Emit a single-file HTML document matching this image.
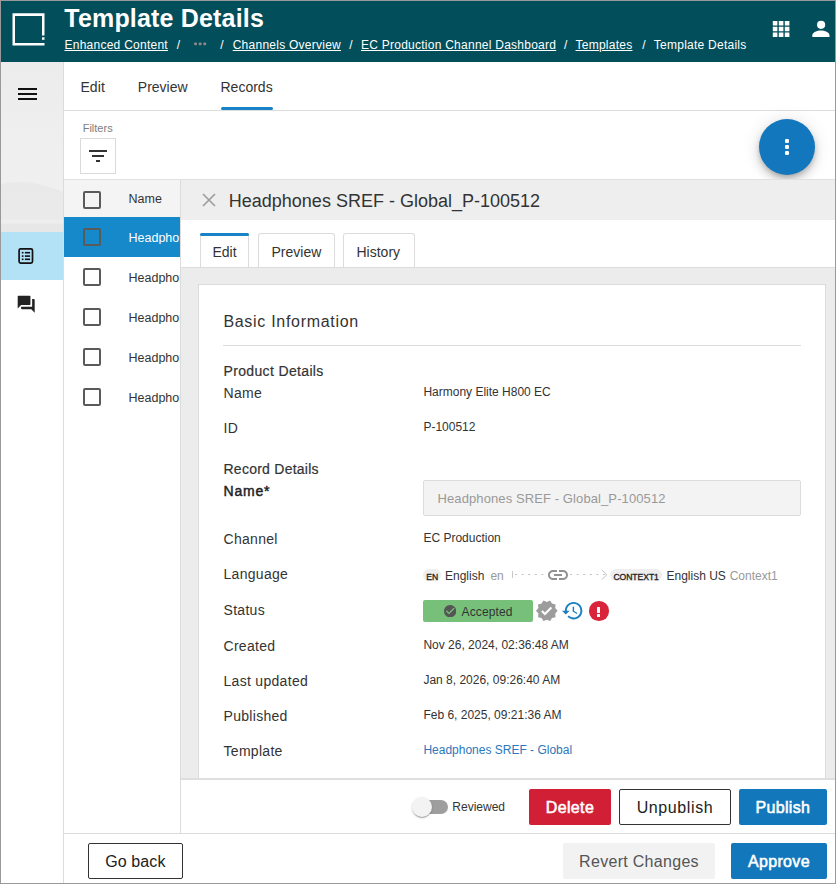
<!DOCTYPE html>
<html><head><meta charset="utf-8"><style>
html,body{margin:0;padding:0;width:836px;height:884px;overflow:hidden;background:#fff}
body{position:relative;font-family:"Liberation Sans", sans-serif}
.t{position:absolute;white-space:nowrap}
.r{position:absolute}
</style></head><body>
<div class="r" style="left:0px;top:0px;width:836px;height:884px;background:#fff"></div>
<div class="r" style="left:0px;top:0px;width:836px;height:62px;background:#034e5b"></div>
<svg class="r" style="left:0;top:0" width="60" height="60"><g fill="#fff">
<path d="M12.5 13.3H44.5V35.5H42V15.9H15V42.9H44.5V45.5H12.5Z"/>
<rect x="42" y="37.3" width="2.5" height="2.5"/></g></svg>
<div class="t" style="left:64.30px;top:5.74px;font-size:25px;line-height:25px;color:#fff;font-weight:700;letter-spacing:0.18px;">Template Details</div>
<div class="t" style="left:64.50px;top:39.34px;font-size:12px;line-height:12px;color:#fff;font-weight:400;letter-spacing:0.25px;text-decoration:underline;text-underline-offset:1px">Enhanced Content</div>
<div class="t" style="left:176.80px;top:39.34px;font-size:12px;line-height:12px;color:#fff;font-weight:400;letter-spacing:0.25px;">/</div>
<svg class="r" style="left:190px;top:40px" width="20" height="8"><g fill="#8e8a88"><rect x="4.1" y="2.6" width="2.9" height="2.6" rx="1"/><rect x="8.7" y="2.6" width="2.9" height="2.6" rx="1"/><rect x="13.3" y="2.6" width="2.9" height="2.6" rx="1"/></g></svg>
<div class="t" style="left:220.20px;top:39.34px;font-size:12px;line-height:12px;color:#fff;font-weight:400;letter-spacing:0.25px;">/</div>
<div class="t" style="left:232.70px;top:39.34px;font-size:12px;line-height:12px;color:#fff;font-weight:400;letter-spacing:0.25px;text-decoration:underline;text-underline-offset:1px">Channels Overview</div>
<div class="t" style="left:349.30px;top:39.34px;font-size:12px;line-height:12px;color:#fff;font-weight:400;letter-spacing:0.25px;">/</div>
<div class="t" style="left:361.00px;top:39.34px;font-size:12px;line-height:12px;color:#fff;font-weight:400;letter-spacing:0.25px;text-decoration:underline;text-underline-offset:1px">EC Production Channel Dashboard</div>
<div class="t" style="left:564.00px;top:39.34px;font-size:12px;line-height:12px;color:#fff;font-weight:400;letter-spacing:0.25px;">/</div>
<div class="t" style="left:575.50px;top:39.34px;font-size:12px;line-height:12px;color:#fff;font-weight:400;letter-spacing:0.25px;text-decoration:underline;text-underline-offset:1px">Templates</div>
<div class="t" style="left:642.30px;top:39.34px;font-size:12px;line-height:12px;color:#fff;font-weight:400;letter-spacing:0.25px;">/</div>
<div class="t" style="left:653.80px;top:39.34px;font-size:12px;line-height:12px;color:#fff;font-weight:400;letter-spacing:0.25px;">Template Details</div>
<svg class="r" style="left:0;top:0" width="836" height="62"><g fill="#fff"><rect x="772.8" y="21.00" width="4.6" height="4.5"/><rect x="772.8" y="26.75" width="4.6" height="4.5"/><rect x="772.8" y="32.50" width="4.6" height="4.5"/><rect x="778.8" y="21.00" width="4.6" height="4.5"/><rect x="778.8" y="26.75" width="4.6" height="4.5"/><rect x="778.8" y="32.50" width="4.6" height="4.5"/><rect x="784.8" y="21.00" width="4.6" height="4.5"/><rect x="784.8" y="26.75" width="4.6" height="4.5"/><rect x="784.8" y="32.50" width="4.6" height="4.5"/></g></svg>
<svg class="r" style="left:0;top:0" width="836" height="62"><g fill="#fff"><circle cx="821.1" cy="24.8" r="4.1"/><path d="M812.3 37V35.4C812.3 32.6 817.2 30.6 820.9 30.6S829.5 32.6 829.5 35.4V37Z"/></g></svg>
<div class="r" style="left:0px;top:62px;width:64px;height:822px;background:#fff"></div>
<div class="r" style="left:0px;top:62px;width:63px;height:170px;background:linear-gradient(#ececec,#efefef 50%,#f0f0ef)"></div>
<svg class="r" style="left:0;top:62px" width="63" height="170"><defs><linearGradient id="mg" x1="0" y1="0" x2="0" y2="1"><stop offset="0" stop-color="#e9e9e9"/><stop offset="1" stop-color="#ebebeb"/></linearGradient></defs><path d="M0 122.5 C6 121 12 120 20 120 C32 120 45 123 63 129.7 L63 170 L0 170Z" fill="url(#mg)"/><rect x="0" y="158" width="63" height="3" fill="#eeeeee"/><rect x="0" y="162" width="63" height="8" fill="#e7e7e7"/></svg>
<div class="r" style="left:63px;top:62px;width:1px;height:822px;background:#dcdcdc"></div>
<div class="r" style="left:18.3px;top:88px;width:18.7px;height:2px;background:#111"></div>
<div class="r" style="left:18.3px;top:93px;width:18.7px;height:2px;background:#111"></div>
<div class="r" style="left:18.3px;top:98px;width:18.7px;height:2px;background:#111"></div>
<div class="r" style="left:0px;top:232px;width:63px;height:47.5px;background:#b3e1f6"></div>
<svg class="r" style="left:0;top:240px" width="63" height="40"><rect x="19.1" y="8.8" width="13.4" height="14.4" rx="1.6" fill="none" stroke="#111" stroke-width="1.7"/><g fill="#111"><rect x="21.8" y="11.9" width="1.7" height="1.6"/><rect x="21.8" y="15.3" width="1.7" height="1.6"/><rect x="21.8" y="18.5" width="1.7" height="1.6"/><rect x="24.9" y="11.9" width="5.2" height="1.6"/><rect x="24.9" y="15.3" width="5.2" height="1.6"/><rect x="24.9" y="18.5" width="5.2" height="1.6"/></g></svg>
<svg class="r" style="left:15.7px;top:294.3px" width="20.4" height="20.4" viewBox="0 0 24 24"><path fill="#222" d="M21 6h-2v9H6v2c0 .55.45 1 1 1h11l4 4V7c0-.55-.45-1-1-1zm-4 6V3c0-.55-.45-1-1-1H3c-.55 0-1 .45-1 1v14l4-4h10c.55 0 1-.45 1-1z"/></svg>
<div class="t" style="left:80.40px;top:80.25px;font-size:14px;line-height:14px;color:#333;font-weight:400;letter-spacing:0.1px;">Edit</div>
<div class="t" style="left:137.80px;top:80.25px;font-size:14px;line-height:14px;color:#333;font-weight:400;letter-spacing:0px;">Preview</div>
<div class="t" style="left:220.50px;top:80.25px;font-size:14px;line-height:14px;color:#333;font-weight:400;letter-spacing:0px;">Records</div>
<div class="r" style="left:220.5px;top:106.5px;width:52px;height:3px;background:#1a82c6;border-radius:2px"></div>
<div class="r" style="left:64px;top:110px;width:772px;height:1px;background:#dedede"></div>
<div class="t" style="left:82.70px;top:122.59px;font-size:11px;line-height:11px;color:#7d7d7d;font-weight:400;letter-spacing:0px;">Filters</div>
<div class="r" style="left:80px;top:138px;width:36px;height:36px;border:1px solid #dadada;box-sizing:border-box"></div>
<div class="r" style="left:88.8px;top:150px;width:18.3px;height:2px;background:#333"></div>
<div class="r" style="left:92.1px;top:155px;width:11.9px;height:2px;background:#333"></div>
<div class="r" style="left:96px;top:160px;width:4px;height:2px;background:#333"></div>
<div class="r" style="left:64px;top:178.5px;width:116px;height:38.5px;background:#f4f4f4;border-top:1px solid #e2e2e2;box-sizing:border-box"></div>
<div class="r" style="left:83px;top:191px;width:18px;height:18px;border:2px solid #5a5a5a;border-radius:2px;box-sizing:border-box"></div>
<div class="t" style="left:128.50px;top:192.62px;font-size:12.5px;line-height:12.5px;color:#333;font-weight:400;letter-spacing:0px;">Name</div>
<div class="r" style="left:64px;top:217px;width:116px;height:40px;background:#1589c9"></div>
<div class="r" style="left:83px;top:228px;width:18px;height:18px;border:2px solid #5a5a5a;border-radius:2px;box-sizing:border-box"></div>
<div class="t" style="left:128.50px;top:231.62px;font-size:12.5px;line-height:12.5px;color:#fff;font-weight:400;letter-spacing:0px;width:51px;overflow:hidden;white-space:nowrap">Headphones SREF - Global_P-100512</div>
<div class="r" style="left:83px;top:268px;width:18px;height:18px;border:2px solid #5a5a5a;border-radius:2px;box-sizing:border-box"></div>
<div class="t" style="left:128.50px;top:271.62px;font-size:12.5px;line-height:12.5px;color:#333;font-weight:400;letter-spacing:0px;width:51px;overflow:hidden;white-space:nowrap">Headphones SREF - Global_P-100512</div>
<div class="r" style="left:83px;top:308px;width:18px;height:18px;border:2px solid #5a5a5a;border-radius:2px;box-sizing:border-box"></div>
<div class="t" style="left:128.50px;top:311.62px;font-size:12.5px;line-height:12.5px;color:#333;font-weight:400;letter-spacing:0px;width:51px;overflow:hidden;white-space:nowrap">Headphones SREF - Global_P-100512</div>
<div class="r" style="left:83px;top:348px;width:18px;height:18px;border:2px solid #5a5a5a;border-radius:2px;box-sizing:border-box"></div>
<div class="t" style="left:128.50px;top:351.62px;font-size:12.5px;line-height:12.5px;color:#333;font-weight:400;letter-spacing:0px;width:51px;overflow:hidden;white-space:nowrap">Headphones SREF - Global_P-100512</div>
<div class="r" style="left:83px;top:388px;width:18px;height:18px;border:2px solid #5a5a5a;border-radius:2px;box-sizing:border-box"></div>
<div class="t" style="left:128.50px;top:391.62px;font-size:12.5px;line-height:12.5px;color:#333;font-weight:400;letter-spacing:0px;width:51px;overflow:hidden;white-space:nowrap">Headphones SREF - Global_P-100512</div>
<div class="r" style="left:759px;top:119px;width:56px;height:56px;background:#1277bd;border-radius:50%;box-shadow:0 3px 5px -1px rgba(0,0,0,.2),0 6px 10px 0 rgba(0,0,0,.14),0 1px 18px 0 rgba(0,0,0,.12)"></div>
<div class="r" style="left:785.2px;top:139.2px;width:3.6px;height:3.6px;background:#fff;border-radius:1.2px"></div>
<div class="r" style="left:785.2px;top:145.2px;width:3.6px;height:3.6px;background:#fff;border-radius:1.2px"></div>
<div class="r" style="left:785.2px;top:151.2px;width:3.6px;height:3.6px;background:#fff;border-radius:1.2px"></div>
<div class="r" style="left:180px;top:178.5px;width:655px;height:654.5px;background:#fff;border-left:1px solid #dcdcdc;border-top:1px solid #e0e0e0;box-sizing:border-box"></div>
<div class="r" style="left:181px;top:180px;width:654px;height:40px;background:#eeeeee"></div>
<svg class="r" style="left:201.7px;top:193px" width="14" height="14"><path d="M1 1L13 13M13 1L1 13" stroke="#9c9c9c" stroke-width="1.6"/></svg>
<div class="t" style="left:228.80px;top:192.06px;font-size:18px;line-height:18px;color:#333;font-weight:400;letter-spacing:0px;">Headphones SREF - Global_P-100512</div>
<div class="r" style="left:199.7px;top:232.7px;width:49.5px;height:34.3px;background:#fff;border:1px solid #dcdcdc;border-bottom:none;border-radius:3px 3px 0 0;box-sizing:border-box"></div>
<div class="r" style="left:199.7px;top:232.8px;width:49.5px;height:3.2px;background:#1a82c6;border-radius:1.6px"></div>
<div class="r" style="left:258.4px;top:232.7px;width:76.6px;height:34.3px;background:#fff;border:1px solid #dcdcdc;border-bottom:none;border-radius:3px 3px 0 0;box-sizing:border-box"></div>
<div class="r" style="left:343.3px;top:232.7px;width:72.2px;height:34.3px;background:#fff;border:1px solid #dcdcdc;border-bottom:none;border-radius:3px 3px 0 0;box-sizing:border-box"></div>
<div class="t" style="left:212.50px;top:244.85px;font-size:14px;line-height:14px;color:#333;font-weight:400;letter-spacing:0px;">Edit</div>
<div class="t" style="left:271.50px;top:244.85px;font-size:14px;line-height:14px;color:#333;font-weight:400;letter-spacing:0px;">Preview</div>
<div class="t" style="left:356.50px;top:244.85px;font-size:14px;line-height:14px;color:#333;font-weight:400;letter-spacing:0px;">History</div>
<div class="r" style="left:181px;top:267px;width:654px;height:511px;background:#ececec;border-top:1px solid #dcdcdc;box-sizing:border-box"></div>
<div class="r" style="left:198px;top:284px;width:628px;height:494px;background:#fff;border:1px solid #dcdcdc;border-bottom:none;box-sizing:border-box"></div>
<div class="t" style="left:223.40px;top:314.46px;font-size:16px;line-height:16px;color:#333;font-weight:400;letter-spacing:0.7px;">Basic Information</div>
<div class="r" style="left:223px;top:345px;width:578px;height:1px;background:#dcdcdc"></div>
<div class="t" style="left:223.50px;top:364.05px;font-size:14px;line-height:14px;color:#333;font-weight:400;letter-spacing:0.35px;-webkit-text-stroke:0.2px #333">Product Details</div>
<div class="t" style="left:223.50px;top:386.15px;font-size:14px;line-height:14px;color:#333;font-weight:400;letter-spacing:0.3px;">Name</div>
<div class="t" style="left:423.40px;top:385.64px;font-size:12px;line-height:12px;color:#333;font-weight:400;letter-spacing:0px;">Harmony Elite H800 EC</div>
<div class="t" style="left:223.50px;top:420.95px;font-size:14px;line-height:14px;color:#333;font-weight:400;letter-spacing:0.3px;">ID</div>
<div class="t" style="left:423.40px;top:420.84px;font-size:12px;line-height:12px;color:#333;font-weight:400;letter-spacing:0px;">P-100512</div>
<div class="t" style="left:223.50px;top:462.15px;font-size:14px;line-height:14px;color:#333;font-weight:400;letter-spacing:0.25px;-webkit-text-stroke:0.2px #333">Record Details</div>
<div class="t" style="left:223.50px;top:483.85px;font-size:14px;line-height:14px;color:#222;font-weight:400;letter-spacing:0.8px;-webkit-text-stroke:0.45px #222">Name*</div>
<div class="r" style="left:423.4px;top:480.4px;width:377.6px;height:35.2px;background:#f3f3f3;border:1px solid #dcdcdc;box-sizing:border-box;border-radius:2px"></div>
<div class="t" style="left:437.50px;top:491.70px;font-size:13px;line-height:13px;color:#999;font-weight:400;letter-spacing:0.1px;">Headphones SREF - Global_P-100512</div>
<div class="t" style="left:223.50px;top:532.15px;font-size:14px;line-height:14px;color:#333;font-weight:400;letter-spacing:0.3px;">Channel</div>
<div class="t" style="left:423.40px;top:531.94px;font-size:12px;line-height:12px;color:#333;font-weight:400;letter-spacing:0px;">EC Production</div>
<div class="t" style="left:223.50px;top:567.45px;font-size:14px;line-height:14px;color:#333;font-weight:400;letter-spacing:0.3px;">Language</div>
<div class="t" style="left:223.50px;top:603.15px;font-size:14px;line-height:14px;color:#333;font-weight:400;letter-spacing:0.3px;">Status</div>
<div class="t" style="left:223.50px;top:638.85px;font-size:14px;line-height:14px;color:#333;font-weight:400;letter-spacing:0.3px;">Created</div>
<div class="t" style="left:423.40px;top:639.24px;font-size:12px;line-height:12px;color:#333;font-weight:400;letter-spacing:0px;">Nov 26, 2024, 02:36:48 AM</div>
<div class="t" style="left:223.50px;top:674.15px;font-size:14px;line-height:14px;color:#333;font-weight:400;letter-spacing:0.3px;">Last updated</div>
<div class="t" style="left:423.40px;top:673.64px;font-size:12px;line-height:12px;color:#333;font-weight:400;letter-spacing:0px;">Jan 8, 2026, 09:26:40 AM</div>
<div class="t" style="left:223.50px;top:709.15px;font-size:14px;line-height:14px;color:#333;font-weight:400;letter-spacing:0.3px;">Published</div>
<div class="t" style="left:423.40px;top:708.64px;font-size:12px;line-height:12px;color:#333;font-weight:400;letter-spacing:0px;">Feb 6, 2025, 09:21:36 AM</div>
<div class="t" style="left:223.50px;top:744.45px;font-size:14px;line-height:14px;color:#333;font-weight:400;letter-spacing:0.3px;">Template</div>
<div class="t" style="left:423.40px;top:743.84px;font-size:12px;line-height:12px;color:#2d77bb;font-weight:400;letter-spacing:0px;">Headphones SREF - Global</div>
<div class="r" style="left:423.1px;top:568.8px;width:17.7px;height:12.2px;background:#eeeeee;border-radius:6px"></div>
<div class="t" style="left:426.30px;top:572.82px;font-size:8.6px;line-height:8.6px;color:#222;font-weight:400;letter-spacing:0px;-webkit-text-stroke:0.3px #222">EN</div>
<div class="t" style="left:445.00px;top:570.04px;font-size:12px;line-height:12px;color:#333;font-weight:400;letter-spacing:0px;">English</div>
<div class="t" style="left:490.40px;top:570.04px;font-size:12px;line-height:12px;color:#999;font-weight:400;letter-spacing:0px;">en</div>
<svg class="r" style="left:505px;top:565px" width="110" height="20"><path d="M7.5 6V13" stroke="#c8c8c8" stroke-width="1"/><path d="M10 9.5H41M65 9.5H101" stroke="#c4c4c4" stroke-width="1" stroke-dasharray="2 4.6"/><path d="M96.8 5L101.8 9.8L96.8 14.6" fill="none" stroke="#c4c4c4" stroke-width="1"/></svg>
<svg class="r" style="left:545.8px;top:562.6px" width="24" height="24" viewBox="0 0 24 24"><path fill="#929292" d="M3.9 12c0-1.71 1.39-3.1 3.1-3.1h4V7H7c-2.76 0-5 2.240-5 5s2.24 5 5 5h4v-1.9H7c-1.71 0-3.1-1.39-3.1-3.1zM8 13h8v-2H8v2zm9-6h-4v1.9h4c1.710 0 3.1 1.39 3.1 3.1s-1.39 3.1-3.1 3.1h-4V17h4c2.76 0 5-2.24 5-5s-2.24-5-5-5z"/></svg>
<div class="r" style="left:610px;top:568.8px;width:51.7px;height:12.2px;background:#eeeeee;border-radius:6px"></div>
<div class="t" style="left:613.40px;top:572.72px;font-size:8.6px;line-height:8.6px;color:#222;font-weight:400;letter-spacing:-0.05px;-webkit-text-stroke:0.3px #222">CONTEXT1</div>
<div class="t" style="left:666.50px;top:570.04px;font-size:12px;line-height:12px;color:#333;font-weight:400;letter-spacing:0px;">English US</div>
<div class="t" style="left:729.70px;top:570.04px;font-size:12px;line-height:12px;color:#999;font-weight:400;letter-spacing:0px;">Context1</div>
<div class="r" style="left:422.9px;top:600px;width:109.8px;height:21.6px;background:#76c07a;border-radius:2px"></div>
<svg class="r" style="left:443.7px;top:604.6px" width="12.4" height="12.4" viewBox="0 0 24 24"><path fill="#555" d="M12 2C6.48 2 2 6.48 2 12s4.48 10 10 10 10-4.48 10-10S17.52 2 12 2zm-2 15l-5-5 1.41-1.41L10 14.17l7.59-7.59L19 8l-9 9z" transform="translate(-2.4 -2.4) scale(1.2)"/></svg>
<div class="t" style="left:461.60px;top:606.14px;font-size:12px;line-height:12px;color:#333;font-weight:400;letter-spacing:0.1px;">Accepted</div>
<svg class="r" style="left:535px;top:599px" width="23.6" height="23.6" viewBox="0 0 24 24"><path fill="#9c9c9c" d="M23 12l-2.44-2.79.34-3.69-3.61-.82-1.89-3.2L12 2.96 8.6 1.5 6.71 4.69 3.1 5.5l.34 3.7L1 12l2.44 2.79-.34 3.7 3.61.82L8.6 22.5l3.4-1.47 3.4 1.46 1.89-3.19 3.61-.82-.34-3.69L23 12zm-12.91 4.72l-3.8-3.81 1.48-1.48 2.32 2.33 5.85-5.87 1.48 1.48-7.33 7.35z"/></svg>
<svg class="r" style="left:561.4px;top:599.1px" width="23.3" height="23.3" viewBox="0 0 24 24"><path fill="#1a7ec2" d="M13 3c-4.97 0-9 4.03-9 9H1l3.89 3.89.07.14L9 12H6c0-3.87 3.13-7 7-7s7 3.13 7 7-3.13 7-7 7c-1.93 0-3.68-.79-4.94-2.06l-1.42 1.42C8.27 19.99 10.51 21 13 21c4.97 0 9-4.03 9-9s-4.03-9-9-9zm-1 5v5l4.28 2.54.72-1.21-3.5-2.08V8H12z"/></svg>
<div class="r" style="left:589.1px;top:601.2px;width:19.5px;height:19.5px;background:#d9253c;border-radius:50%"></div>
<div class="r" style="left:597.45px;top:606.6px;width:2.7px;height:6.6px;background:#fff;border-radius:0.5px"></div>
<div class="r" style="left:597.45px;top:614px;width:2.7px;height:2.5px;background:#fff;border-radius:0.5px"></div>
<div class="r" style="left:181px;top:778px;width:654px;height:2px;background:#dedede"></div>
<div class="r" style="left:414px;top:800px;width:34px;height:14px;background:#9e9e9e;border-radius:7px"></div>
<div class="r" style="left:411.7px;top:796.8px;width:20px;height:20px;background:#f3f3f3;border-radius:50%;box-shadow:0 2px 1px -1px rgba(0,0,0,.2),0 1px 1px 0 rgba(0,0,0,.14),0 1px 3px 0 rgba(0,0,0,.12)"></div>
<div class="t" style="left:452.30px;top:800.84px;font-size:12px;line-height:12px;color:#333;font-weight:400;letter-spacing:0px;">Reviewed</div>
<div class="r" style="left:529px;top:789.3px;width:82px;height:35.4px;background:#d11f36;box-sizing:border-box;border-radius:2px"></div>
<div class="t" style="left:529px;top:790.3px;width:82px;height:35.4px;line-height:35.4px;text-align:center;font-size:16px;color:#fff;font-weight:400;letter-spacing:0.35px;-webkit-text-stroke:0.55px #fff">Delete</div>
<div class="r" style="left:619px;top:789.3px;width:112px;height:35.4px;background:#fff;border:1px solid #333;box-sizing:border-box;border-radius:2px"></div>
<div class="t" style="left:619px;top:790.3px;width:112px;height:35.4px;line-height:35.4px;text-align:center;font-size:16px;color:#222;font-weight:400;letter-spacing:0.6px;">Unpublish</div>
<div class="r" style="left:739px;top:789.3px;width:87.8px;height:35.4px;background:#1378bb;box-sizing:border-box;border-radius:2px"></div>
<div class="t" style="left:739px;top:790.3px;width:87.8px;height:35.4px;line-height:35.4px;text-align:center;font-size:16px;color:#fff;font-weight:400;letter-spacing:0.35px;-webkit-text-stroke:0.55px #fff">Publish</div>
<div class="r" style="left:64px;top:833px;width:771px;height:1px;background:#dcdcdc"></div>
<div class="r" style="left:87.9px;top:843px;width:95.1px;height:36px;background:#fff;border:1px solid #333;box-sizing:border-box;border-radius:2px"></div>
<div class="t" style="left:87.9px;top:844px;width:95.1px;height:36px;line-height:36px;text-align:center;font-size:16px;color:#222;font-weight:400;letter-spacing:0.1px;">Go back</div>
<div class="r" style="left:563px;top:843px;width:152px;height:36px;background:#f2f2f2;box-sizing:border-box;border-radius:2px"></div>
<div class="t" style="left:563px;top:844px;width:152px;height:36px;line-height:36px;text-align:center;font-size:16px;color:#555;font-weight:400;letter-spacing:0.3px;">Revert Changes</div>
<div class="r" style="left:731px;top:843px;width:95.8px;height:36px;background:#1378bb;box-sizing:border-box;border-radius:2px"></div>
<div class="t" style="left:731px;top:844px;width:95.8px;height:36px;line-height:36px;text-align:center;font-size:16px;color:#fff;font-weight:400;letter-spacing:0.35px;-webkit-text-stroke:0.55px #fff">Approve</div>
<div class="r" style="left:0px;top:0px;width:836px;height:884px;border:1px solid #999;box-sizing:border-box;background:transparent"></div>
</body></html>
